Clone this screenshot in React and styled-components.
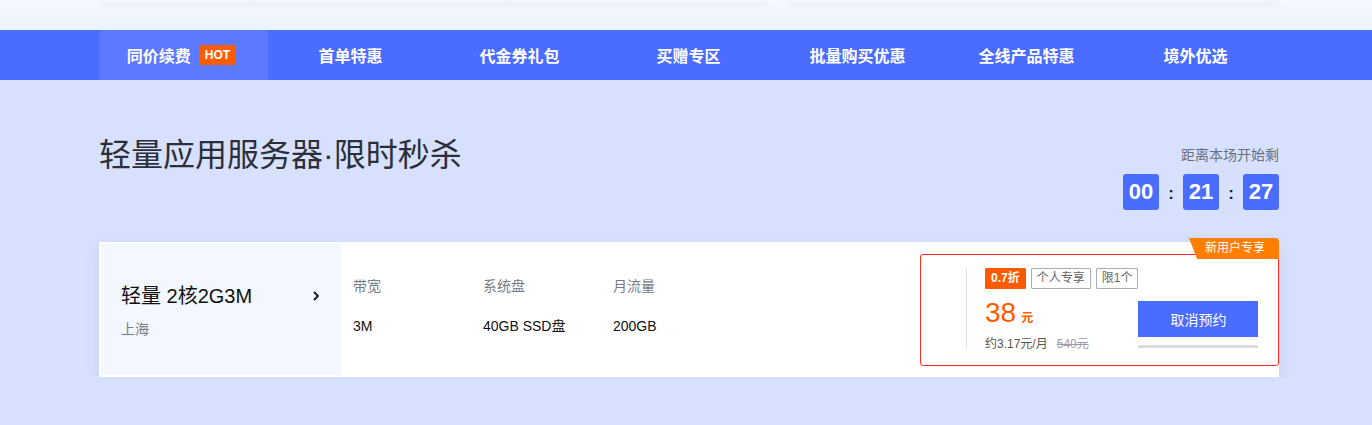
import React from 'react';
import styled, { createGlobalStyle } from 'styled-components';

const GlobalStyle = createGlobalStyle`
  * { box-sizing: border-box; }
  body {
    margin: 0;
    font-family: "Liberation Sans", "Noto Sans CJK SC", sans-serif;
    background: #d7e1fd;
    color: #333;
  }
`;

const TopStrip = styled.div`
  height: 30px;
  overflow: hidden;
  background: linear-gradient(180deg, #f6f9fe 0%, #ecf3fd 100%);
`;

const TopCards = styled.div`
  width: 1178px;
  margin-left: calc(50% - 586px);
  display: flex;
  gap: 20px;
`;

const TopCard = styled.div`
  flex: ${props => props.grow};
  height: 2px;
  background: #f3f6fd;
  box-shadow: 0 2px 6px rgba(120, 140, 200, 0.25);
`;

const NavBar = styled.nav`
  height: 50px;
  background: #4a6cff;
`;

const NavInner = styled.div`
  width: 1183px;
  margin-left: calc(50% - 587px);
  display: flex;
  height: 100%;
`;

const NavItem = styled.div`
  flex: 1;
  display: flex;
  align-items: center;
  justify-content: center;
  gap: 8px;
  padding-right: 4px;
  color: #fff;
  font-size: 16px;
  font-weight: bold;
  background: ${props => (props.active ? '#5b7aff' : 'transparent')};
`;

const HotTag = styled.span`
  background: #ff5c00;
  color: #fff;
  font-size: 12px;
  font-weight: bold;
  padding: 0 6px;
  line-height: 20px;
  border-radius: 1px;
`;

const Main = styled.section`
  width: 1180px;
  margin-left: calc(50% - 587px);
  padding-top: 53px;
`;

const Header = styled.div`
  display: flex;
  justify-content: space-between;
  align-items: flex-start;
`;

const Title = styled.h1`
  margin: 0;
  font-size: 32px;
  line-height: 44px;
  font-weight: normal;
  color: #2b2f3a;
  font-family: "Liberation Sans", "Noto Sans CJK SC", sans-serif;
`;

const Countdown = styled.div`
  margin-top: 12px;
  display: flex;
  flex-direction: column;
  align-items: flex-end;
`;

const CountLabel = styled.div`
  font-size: 14px;
  line-height: 20px;
  color: #6a6f7c;
  margin-bottom: 9px;
`;

const CountRow = styled.div`
  display: flex;
  align-items: center;
`;

const TimeBox = styled.div`
  width: 36px;
  height: 36px;
  border-radius: 3px;
  background: #4a6cff;
  color: #fff;
  font-size: 22px;
  font-weight: bold;
  display: flex;
  align-items: center;
  justify-content: center;
`;

const Colon = styled.span`
  width: 24px;
  text-align: center;
  color: #222;
  font-size: 17px;
  font-weight: bold;
  padding-top: 4px;
`;

const Card = styled.div`
  margin-top: 32px;
  height: 135px;
  background: #fff;
  padding: 2px 0 2px 2px;
  display: flex;
  box-shadow: 0 4px 12px rgba(120, 140, 200, 0.2);
`;

const ProductPanel = styled.div`
  width: 240px;
  background: #f3f7ff;
  padding: 0 20px;
  display: flex;
  flex-direction: column;
  justify-content: center;
  gap: 6px;
`;

const ProductTitle = styled.div`
  display: flex;
  justify-content: space-between;
  align-items: center;
  font-size: 20px;
  line-height: 32px;
  color: #111;
`;

const ProductCity = styled.div`
  font-size: 14px;
  color: #777b86;
  line-height: 22px;
`;

const Specs = styled.div`
  display: flex;
  padding: 31px 0 0 12px;
  align-items: flex-start;
`;

const Spec = styled.div`
  width: 130px;
  display: flex;
  flex-direction: column;
  gap: 18px;
  font-size: 14px;
  line-height: 22px;
`;

const SpecLabel = styled.div`
  color: #777b86;
`;

const SpecValue = styled.div`
  color: #111;
`;

const Spacer = styled.div`
  flex: 1;
`;

const OfferBox = styled.div`
  position: relative;
  width: 359px;
  margin: 10px 0 9px;
  border: 1px solid #ff2a1e;
  border-radius: 3px;
  display: flex;
  align-items: flex-start;
  padding: 0 21px 0 45px;
`;

const Ribbon = styled.div`
  position: absolute;
  top: -17px;
  right: -1px;
  width: 90px;
  height: 21px;
  background: #ff7e00;
  color: #fff;
  font-size: 12px;
  line-height: 21px;
  padding-left: 16px;
  border-top-right-radius: 4px;
  clip-path: polygon(0 0, 100% 0, 100% 100%, 9% 100%);
`;

const PriceCol = styled.div`
  flex: 1;
  margin-top: 13px;
  height: 82px;
  border-left: 1px solid #dde2ec;
  padding-left: 18px;
  display: flex;
  flex-direction: column;
`;

const Tags = styled.div`
  display: flex;
  gap: 5px;
  white-space: nowrap;
`;

const Tag = styled.span`
  flex-shrink: 0;
  height: 21px;
  line-height: 19px;
  padding: 0 5px;
  font-size: 12px;
  border: 1px solid ${props => (props.hot ? '#ff5a00' : '#a9adb8')};
  background: ${props => (props.hot ? '#ff5a00' : '#fff')};
  color: ${props => (props.hot ? '#fff' : '#666')};
  font-weight: ${props => (props.hot ? 'bold' : 'normal')};
  border-radius: 1px;
`;

const Price = styled.div`
  margin-top: 7px;
  color: #ff5a00;
  font-size: 28px;
  line-height: 34px;
  display: flex;
  align-items: baseline;
  gap: 5px;
`;

const Unit = styled.span`
  font-size: 12px;
  font-weight: bold;
`;

const Monthly = styled.div`
  font-size: 12px;
  color: #555;
  line-height: 18px;
  display: flex;
  gap: 9px;
`;

const OldPrice = styled.span`
  color: #9a9ea8;
  text-decoration: line-through;
`;

const ActionCol = styled.div`
  display: flex;
  flex-direction: column;
  gap: 8px;
  margin-top: 46px;
`;

const Button = styled.button`
  width: 120px;
  height: 36px;
  border: none;
  background: #4a6cff;
  color: #fff;
  font-size: 14px;
  font-family: inherit;
  cursor: pointer;
`;

const Progress = styled.div`
  width: 120px;
  height: 3px;
  background: #d9dbe2;
`;

const Chevron = () => (
  <svg width="10" height="12" viewBox="0 0 10 12" fill="none">
    <path d="M3 2 L7 6 L3 10" stroke="#111" strokeWidth="1.8" />
  </svg>
);

const navItems = ['同价续费', '首单特惠', '代金券礼包', '买赠专区', '批量购买优惠', '全线产品特惠', '境外优选'];

const specs = [
  { label: '带宽', value: '3M' },
  { label: '系统盘', value: '40GB SSD盘' },
  { label: '月流量', value: '200GB' },
];

export default function App() {
  return (
    <>
      <GlobalStyle />
      <TopStrip>
        <TopCards>
          <TopCard grow={668} />
          <TopCard grow={490} />
        </TopCards>
      </TopStrip>
      <NavBar>
        <NavInner>
          {navItems.map((item, i) => (
            <NavItem key={item} active={i === 0}>
              {item}
              {i === 0 && <HotTag>HOT</HotTag>}
            </NavItem>
          ))}
        </NavInner>
      </NavBar>
      <Main>
        <Header>
          <Title>轻量应用服务器·限时秒杀</Title>
          <Countdown>
            <CountLabel>距离本场开始剩</CountLabel>
            <CountRow>
              <TimeBox>00</TimeBox>
              <Colon>:</Colon>
              <TimeBox>21</TimeBox>
              <Colon>:</Colon>
              <TimeBox>27</TimeBox>
            </CountRow>
          </Countdown>
        </Header>
        <Card>
          <ProductPanel>
            <ProductTitle>
              <span>轻量 2核2G3M</span>
              <Chevron />
            </ProductTitle>
            <ProductCity>上海</ProductCity>
          </ProductPanel>
          <Specs>
            {specs.map(s => (
              <Spec key={s.label}>
                <SpecLabel>{s.label}</SpecLabel>
                <SpecValue>{s.value}</SpecValue>
              </Spec>
            ))}
          </Specs>
          <Spacer />
          <OfferBox>
            <Ribbon>新用户专享</Ribbon>
            <PriceCol>
              <Tags>
                <Tag hot>0.7折</Tag>
                <Tag>个人专享</Tag>
                <Tag>限1个</Tag>
              </Tags>
              <Price>
                38<Unit>元</Unit>
              </Price>
              <Monthly>
                <span>约3.17元/月</span>
                <OldPrice>540元</OldPrice>
              </Monthly>
            </PriceCol>
            <ActionCol>
              <Button>取消预约</Button>
              <Progress />
            </ActionCol>
          </OfferBox>
        </Card>
      </Main>
    </>
  );
}
